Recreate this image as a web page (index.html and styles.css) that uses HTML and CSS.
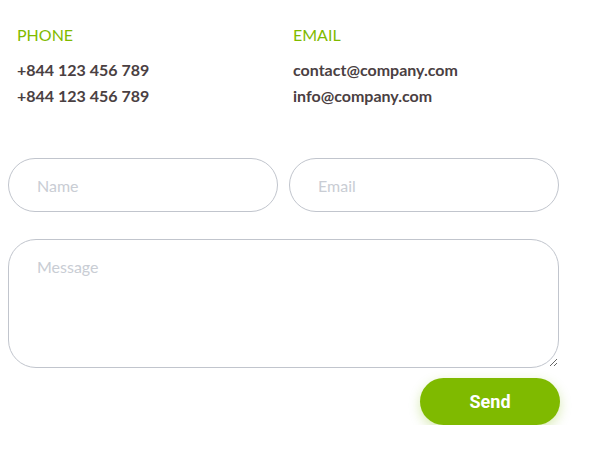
FILE: index.html
```html
<!DOCTYPE html>
<html lang="en">
<head>
    <meta charset="UTF-8">
    <meta name="viewport" content="width=device-width, initial-scale=1.0">
    <title>Contact</title>
    <link rel="stylesheet" href="styles.css">
</head>
<body>

<div class="contact">
    <div class="info">
        <div class="info-col">
            <h3>PHONE</h3>
            <p>+844 123 456 789</p>
            <p>+844 123 456 789</p>
        </div>
        <div class="info-col">
            <h3>EMAIL</h3>
            <p>contact@company.com</p>
            <p>info@company.com</p>
        </div>
    </div>

    <form class="contact-form">
        <div class="row">
            <input type="text" placeholder="Name">
            <input type="email" placeholder="Email">
        </div>
        <textarea placeholder="Message"></textarea>
        <div class="actions">
            <button type="button" class="send">Send</button>
        </div>
    </form>
</div>

</body>
</html>
```

FILE: styles.css
```css
body {
    font-family: 'Lato', 'Liberation Sans', sans-serif;
    margin: 0;
    padding: 0;
    background-color: #fff;
}

.info {
    display: grid;
    grid-template-columns: 276px auto;
    padding: 25px 0 0 17px;
}

.info h3 {
    margin: 0 0 12px;
    font-size: 16px;
    line-height: 20px;
    font-weight: 400;
    color: #7fba00;
}

.info p {
    margin: 0;
    font-size: 16px;
    line-height: 26px;
    font-weight: 700;
    color: #4a4042;
}

.contact-form {
    width: 551px;
    margin: 49px 0 0 8px;
}

.row {
    display: flex;
    gap: 11px;
    margin-bottom: 27px;
}

.contact-form input,
.contact-form textarea {
    box-sizing: border-box;
    font-family: 'Lato', sans-serif;
    font-size: 16px;
    color: #4a4042;
    border: 1px solid #c1c5cd;
    outline: none;
    background: #fff;
}

.contact-form input {
    flex: 1;
    width: 0;
    height: 54px;
    padding: 0 28px;
    border-radius: 27px;
}

.contact-form textarea {
    display: block;
    width: 100%;
    height: 129px;
    padding: 17px 28px;
    border-radius: 28px;
    resize: vertical;
}

.contact-form ::placeholder {
    color: #c9cdd4;
}

.actions {
    display: flex;
    justify-content: flex-end;
    margin-right: -1px;
    margin-top: 10px;
}

.send {
    width: 140px;
    height: 47px;
    border: none;
    border-radius: 24px;
    background-color: #7fba00;
    color: #fff;
    font-family: 'Roboto', 'Inter', sans-serif;
    font-size: 18px;
    font-weight: 700;
    cursor: pointer;
    box-shadow: 0 4px 12px rgba(127, 186, 0, 0.3);
}
```
